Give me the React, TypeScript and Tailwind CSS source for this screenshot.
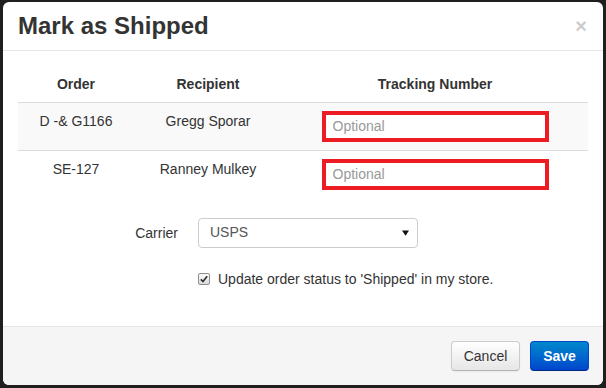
import React from "react";

// Rows in the "Mark as Shipped" dialog
const ROWS = [
  { order: "D -& G1166", recipient: "Gregg Sporar" },
  { order: "SE-127", recipient: "Ranney Mulkey" },
];

function CheckBox() {
  return (
    <span className="flex h-[12px] w-[12px] items-center justify-center rounded-[2px] border border-[#8f8f8f] bg-gradient-to-b from-[#fcfcfc] to-[#dcdcdc]">
      <svg viewBox="0 0 12 12" className="h-[10px] w-[10px]">
        <path d="M2.2 6.4 L4.8 9 L9.8 2.8" fill="none" stroke="#333" strokeWidth="2" />
      </svg>
    </span>
  );
}

export default function App() {
  return (
    <div
      className="min-h-screen bg-[#1f1f1f] pl-[3px] pt-[2px]"
      style={{ fontFamily: '"Liberation Sans", Arial, sans-serif' }}
    >
      <div className="flex h-[383px] w-[600px] flex-col overflow-hidden rounded-[6px] bg-white text-[14px] text-[#333]">
        {/* Header */}
        <div className="flex h-[49px] shrink-0 items-center justify-between border-b border-[#e5e5e5] pl-[15px] pr-[16px]">
          <h3 className="text-[24px] font-bold leading-none text-[#333]">Mark as Shipped</h3>
          <button className="text-[20px] font-bold leading-none text-black opacity-20">×</button>
        </div>

        {/* Body */}
        <div className="flex-1 px-[15px] pt-[15px]">
          <table className="mb-[20px] w-full table-fixed border-collapse">
            <colgroup>
              <col className="w-[116px]" />
              <col className="w-[148px]" />
              <col />
            </colgroup>
            <thead>
              <tr className="border-b border-[#ddd]">
                <th className="h-[36px] px-[8px] text-center align-middle font-bold leading-[20px]">Order</th>
                <th className="h-[36px] px-[8px] text-center align-middle font-bold leading-[20px]">Recipient</th>
                <th className="h-[36px] px-[8px] text-center align-middle font-bold leading-[20px]">Tracking Number</th>
              </tr>
            </thead>
            <tbody>
              {ROWS.map((r, i) => (
                <tr key={r.order} className={i === 0 ? "border-b border-[#ddd] bg-[#f9f9f9]" : "bg-white"}>
                  <td className="px-[8px] pt-[8px] text-center align-top leading-[20px]">{r.order}</td>
                  <td className="px-[8px] pt-[8px] text-center align-top leading-[20px]">{r.recipient}</td>
                  <td className="px-[8px] py-[8px] align-top">
                    <input
                      placeholder="Optional"
                      className="mx-auto block h-[31px] w-[227px] border-4 border-[#ed1c24] bg-white px-[7px] text-[14px] text-[#555] outline-none placeholder:text-[#999]"
                    />
                  </td>
                </tr>
              ))}
            </tbody>
          </table>

          <div className="flex h-[30px] items-center gap-[20px]">
            <label className="w-[160px] text-right leading-[20px]">Carrier</label>
            <div className="flex h-[30px] w-[220px] items-center justify-between rounded-[4px] border border-[#ccc] bg-white pl-[11px] pr-[8px] text-[#555]">
              <span>USPS</span>
              <svg viewBox="0 0 8 6" className="h-[6px] w-[7px]">
                <path d="M0 0 H8 L4 6 Z" fill="#111" />
              </svg>
            </div>
          </div>

          <div className="ml-[180px] mt-[21px] flex h-[20px] items-center gap-[8px]">
            <CheckBox />
            <span className="leading-[20px]">Update order status to 'Shipped' in my store.</span>
          </div>
        </div>

        {/* Footer */}
        <div className="flex h-[59px] shrink-0 items-center justify-end gap-[10px] border-t border-[#e5e5e5] bg-[#f5f5f5] pr-[14px]">
          <button className="h-[30px] w-[69px] rounded-[4px] border border-[#ccc] border-b-[#b3b3b3] bg-gradient-to-b from-white to-[#e6e6e6] text-[14px] text-[#333] shadow-[inset_0_1px_0_rgba(255,255,255,0.2),0_1px_2px_rgba(0,0,0,0.05)]">
            Cancel
          </button>
          <button className="h-[30px] w-[59px] rounded-[4px] border border-[#0044cc] border-b-[#002a80] bg-gradient-to-b from-[#0088cc] to-[#0044cc] text-[14px] font-bold text-white">
            Save
          </button>
        </div>
      </div>
    </div>
  );
}
